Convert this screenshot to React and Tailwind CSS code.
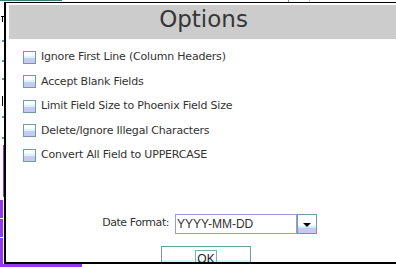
import React from 'react';

const options = [
  'Ignore First Line (Column Headers)',
  'Accept Blank Fields',
  'Limit Field Size to Phoenix Field Size',
  'Delete/Ignore Illegal Characters',
  'Convert All Field to UPPERCASE',
];

function CheckBox() {
  return (
    <span className="block w-[13px] h-[13px] shrink-0 border border-[#6f9d9d] bg-[linear-gradient(to_bottom,#ffffff_0%,#ffffff_28%,#d6f6fa_40%,#d6f6fa_52%,#c8c8f2_60%,#c8c8f2_100%)]" />
  );
}

export default function App() {
  return (
    <div className="w-[396px] h-[267px] bg-white overflow-hidden flex flex-col font-['DejaVu_Sans',sans-serif]">
      {/* strip behind the dialog, top */}
      <div className="h-[2px] shrink-0 flex items-start">
        <div className="w-[62px] h-[1px] bg-[#3f7a7a]" />
        <div className="w-[226px]" />
        <div className="w-[1px] h-[2px] bg-[#6f9d9d]" />
        <div className="w-[20px]" />
        <div className="w-[1px] h-[2px] bg-[#c8c8f2]" />
      </div>

      <div className="h-[262px] shrink-0 flex">
        {/* strip behind the dialog, left */}
        <div className="w-[4px] shrink-0 flex flex-col">
          <div className="h-[12px] shrink-0" />
          <div className="h-[8px] shrink-0 w-[4px] flex flex-col items-end">
            <div className="w-[3px] h-[1px] mt-[2px] bg-black" />
            <div className="w-[1px] h-[5px] mr-[1px] bg-black" />
          </div>
          <div className="h-[18px] shrink-0" />
          <div className="h-[2px] shrink-0 w-[2px] ml-[2px] bg-[#5f9a9a]" />
          <div className="h-[18px] shrink-0" />
          <div className="h-[2px] shrink-0 w-[2px] ml-[2px] bg-[#5f9a9a]" />
          <div className="h-[16px] shrink-0" />
          <div className="h-[2px] shrink-0 w-[2px] ml-[2px] bg-[#5f9a9a]" />
          <div className="h-[16px] shrink-0" />
          <div className="h-[10px] shrink-0 w-[1px] ml-[2px] bg-black" />
          <div className="h-[10px] shrink-0" />
          <div className="h-[2px] shrink-0 w-[2px] ml-[2px] bg-[#5f9a9a]" />
          <div className="h-[19px] shrink-0" />
          <div className="h-[2px] shrink-0 w-[2px] ml-[2px] bg-[#5f9a9a]" />
          <div className="h-[6px] shrink-0" />
          <div className="h-[52px] shrink-0 w-[1px] ml-[3px] bg-[#9436f2]" />
          <div className="h-[3px] shrink-0" />
          <div className="h-[18px] shrink-0 w-[3px] bg-[#9436f2]" />
          <div className="h-[1px] shrink-0" />
          <div className="h-[18px] shrink-0 w-[3px] bg-[#9436f2]" />
          <div className="h-[1px] shrink-0" />
          <div className="flex-1 w-[3px] bg-[#9436f2]" />
        </div>

        {/* dialog */}
        <div className="flex-1 border-t border-l-2 border-b-2 border-black overflow-hidden flex flex-col">
          <div className="mt-[2px] ml-[3px] h-[34px] shrink-0 bg-[#cccccc] flex justify-center">
            <span className="text-[23px] leading-[28px] text-[#363636] pl-[2px]">Options</span>
          </div>

          <div className="mt-[6px] shrink-0 flex flex-col">
            {options.map((label) => (
              <div key={label} className="h-[24.5px] shrink-0 flex items-center pl-[17px] gap-[5px]">
                <CheckBox />
                <span className="text-[11px] tracking-[-0.2px] text-[#333333] whitespace-nowrap">{label}</span>
              </div>
            ))}
          </div>

          <div className="mt-[46px] h-[20px] shrink-0 flex items-center">
            <span className="w-[163px] text-right text-[11px] tracking-[-0.45px] text-[#333333]">Date Format:</span>
            <div className="ml-[6px] flex">
              <div className="w-[122px] h-[20px] border border-[#9a9ad6] bg-white flex items-center pl-[1px] text-[12px] font-['Liberation_Sans',sans-serif] text-[#333333]">
                YYYY-MM-DD
              </div>
              <div className="w-[20px] h-[20px] border border-[#6f9d9d] flex items-start justify-center pt-[8px] bg-[linear-gradient(to_bottom,#ffffff_0%,#ffffff_55%,#d6f6fa_62%,#d6f6fa_68%,#c8c8f2_72%,#c8c8f2_100%)]">
                <span className="block w-0 h-0 border-l-[4px] border-r-[4px] border-t-[4px] border-l-transparent border-r-transparent border-t-black" />
              </div>
            </div>
          </div>

          <div className="mt-[12px] ml-[155px] w-[90px] h-[22px] shrink-0 border border-[#6f9d9d] flex justify-center pt-[3px] bg-[linear-gradient(to_bottom,#ffffff_0%,#ffffff_62%,#d6f6fa_68%,#d6f6fa_76%,#c8c8f2_82%,#c8c8f2_100%)]">
            <span className="h-[18px] px-[1px] border border-[#7fb0b0] text-[12px] leading-[16px] font-['Liberation_Sans',sans-serif] text-[#222222]">OK</span>
          </div>
        </div>
      </div>

      {/* strip behind the dialog, bottom */}
      <div className="h-[3px] shrink-0 flex">
        <div className="w-[82px] h-[3px] bg-[#9436f2]" />
      </div>
    </div>
  );
}
